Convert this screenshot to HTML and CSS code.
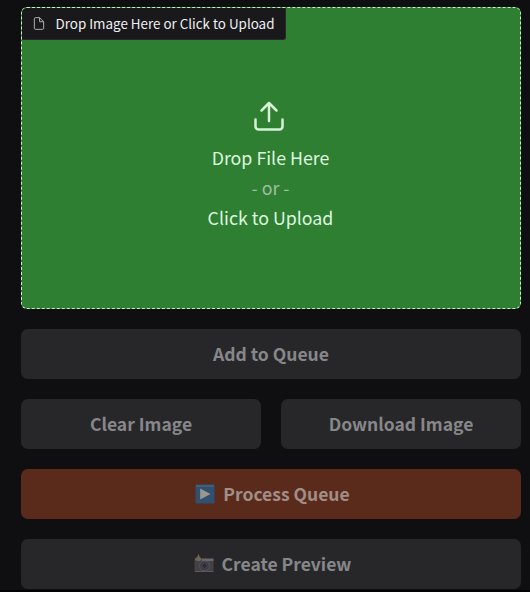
FILE: index.html
```
<!DOCTYPE html>
<html lang="en">
<head>
<meta charset="utf-8">
<title>Image Queue</title>
<link rel="stylesheet" href="styles.css">
</head>
<body>
<main class="panel">
  <section class="dropzone">
    <div class="label">
      <svg class="file-icon" viewBox="0 0 24 24"><path d="M13 2H6a2 2 0 0 0-2 2v16a2 2 0 0 0 2 2h12a2 2 0 0 0 2-2V9z"/><path d="M13 2v7h7"/></svg>
      <span class="label-text">Drop Image Here or Click to Upload</span>
    </div>
    <div class="prompt">
      <svg class="upload-icon" viewBox="0 0 30 30"><path d="M1.5 18.5v7a3 3 0 0 0 3 3h21a3 3 0 0 0 3-3v-7M15 20V2M7.5 9.5 15 2l7.5 7.5"/></svg>
      <span>Drop File Here</span>
      <span class="or">- or -</span>
      <span>Click to Upload</span>
    </div>
  </section>
  <button class="btn" disabled><span>Add to Queue</span></button>
  <div class="row">
    <button class="btn" disabled><span>Clear Image</span></button>
    <button class="btn" disabled><span>Download Image</span></button>
  </div>
  <button class="btn with-icon primary" disabled>
    <svg class="emoji" viewBox="0 0 20 20"><rect x=".5" y=".5" width="19" height="19" rx="1" fill="#315070"/><path d="M1 1h18v2H1z" fill="#3d6080"/><path d="M5.2 4.5v11L15.5 10z" fill="#9b9690"/></svg>
    <span>Process Queue</span>
  </button>
  <button class="btn with-icon" disabled>
    <svg class="emoji" viewBox="0 0 20 20"><path d="M.5 5.5h19v12H.5z" fill="#444244"/><path d="M8 4.5h11.5v2.5H8z" fill="#6b696b"/><path d="M1 17h18.5v1H1z" fill="#5c5a5e"/><circle cx="10.5" cy="11.8" r="4.8" fill="#39373f" stroke="#57555f"/><circle cx="10.5" cy="11.8" r="2.7" fill="#2d2d38" stroke="#4c4959"/><path d="m4.5 0 1.3 3 2.2 2-2 2H3L.5 5l2.7-2z" fill="#6d6857"/></svg>
    <span>Create Preview</span>
  </button>
</main>
<div class="edge"></div>
</body>
</html>
```
FILE: styles.css
```
* { box-sizing: border-box; }
body {
  margin: 0;
  height: 592px;
  overflow: hidden;
  display: flex;
  flex-direction: column;
  background: #0f0f11;
  font-family: "Noto Sans CJK SC", "Noto Sans", sans-serif;
}
.panel {
  flex: none;
  height: 590px;
  padding: 7px 9px 0 21px;
  display: flex;
  flex-direction: column;
  gap: 20px;
}
.edge { height: 2px; background: #020204; }
.dropzone {
  height: 302px;
  flex: none;
  display: flex;
  flex-direction: column;
  align-items: flex-start;
  overflow: hidden;
  border: 1px dashed #c5edc8;
  border-radius: 6px;
  background: #2f7f33;
}
.label {
  width: 264px;
  height: 32px;
  flex: none;
  display: flex;
  align-items: center;
  gap: 9.5px;
  padding-left: 10px;
  border: solid #29292d;
  border-width: 0 1px 1px 0;
  border-radius: 0 0 3px 0;
  background: #19191c;
  color: #efeff1;
  font-size: 13.4px;
  white-space: nowrap;
}
.label-text { padding-bottom: 2px; }
.file-icon {
  width: 14px;
  height: 15px;
  fill: none;
  stroke: #b0b0b4;
  stroke-width: 1.7;
}
.prompt {
  align-self: stretch;
  display: flex;
  flex-direction: column;
  align-items: center;
  padding: 61px 3px 0 2px;
  color: #ddf6de;
  font-size: 17.8px;
  line-height: 30px;
}
.upload-icon {
  width: 30px;
  height: 30px;
  margin: 0 4px 11px 0;
  fill: none;
  stroke: #d5f2d7;
  stroke-width: 2.5;
  stroke-linecap: round;
  stroke-linejoin: round;
}
.or { color: #9fbea0; }
.row { display: flex; gap: 20px; }
.btn {
  flex: none;
  width: 100%;
  height: 50px;
  padding: 0;
  display: flex;
  align-items: center;
  justify-content: center;
  gap: 8px;
  border: 0;
  border-radius: 7px;
  background: #27272a;
  color: #87878a;
  font: 700 17.5px/28px "Noto Sans CJK SC", "Noto Sans", sans-serif;
}
.row .btn { flex: 1; width: auto; }
.with-icon { padding-left: 3px; }
.primary { background: #5a2b1b; color: #a18e88; }
.emoji { width: 20px; height: 20px; }
```
